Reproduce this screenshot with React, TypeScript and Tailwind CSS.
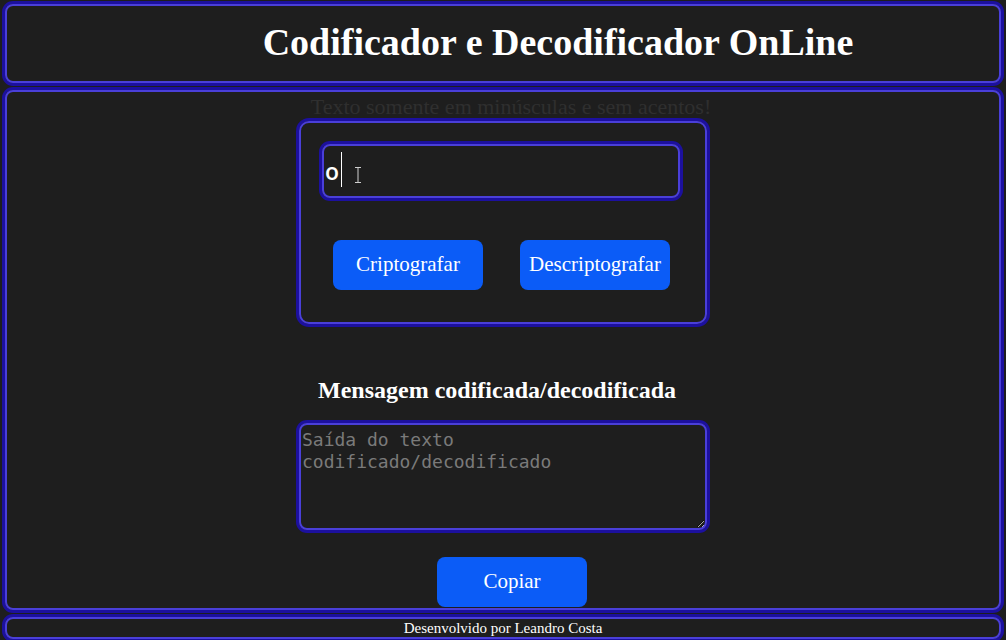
import { useState } from 'react';

export default function App() {
  const [texto, setTexto] = useState('o');
  const [saida, setSaida] = useState('');

  const frame = 'border-2 border-[#4a3fd9] shadow-[0_0_0_3px_#1c109e]';
  const botao =
    'w-[150px] h-[50px] rounded-lg bg-[#0b5cf7] text-white text-[21px] font-["Liberation_Serif",serif]';

  return (
    <div className="h-[640px] w-full overflow-hidden bg-[#1e1e1e] px-[5px] pt-[4px] flex flex-col font-['Liberation_Serif',serif]">
      {/* Cabeçalho */}
      <header className={`h-[79px] rounded-lg ${frame} flex items-center justify-center pl-[110px]`}>
        <h1 className="text-[38px] font-bold text-white leading-none pb-[4px]">
          Codificador e Decodificador OnLine
        </h1>
      </header>

      {/* Conteúdo */}
      <main className={`mt-[7px] h-[520px] rounded-lg ${frame} flex flex-col items-center`}>
        <p className="mt-[1px] h-[28px] text-[22px] text-[#2f2f2f] leading-[28px] pl-[16px]">
          Texto somente em minúsculas e sem acentos!
        </p>

        <div className={`w-[408px] h-[203px] rounded-[10px] ${frame} px-[21px] pt-[21px]`}>
          <div className="relative">
            <input
              value={texto}
              onChange={(e) => setTexto(e.target.value)}
              className={`w-[358px] h-[54px] rounded-lg ${frame} bg-transparent px-[1px] text-white text-[23px] font-semibold font-['Open_Sans',sans-serif] outline-none`}
            />
            <span className="absolute left-[19px] top-[8px] w-px h-[35px] bg-white" />
            <svg className="absolute left-[32px] top-[23px]" width="8" height="16" viewBox="0 0 8 16">
              <path d="M1 0.5h6M4 0.5v15M1 15.5h6" stroke="#cfcfcf" strokeWidth="1" fill="none" />
            </svg>
          </div>
          <div className="mt-[42px] flex justify-center gap-[37px] pr-[3px]">
            <button className={botao}>Criptografar</button>
            <button className={botao}>Descriptografar</button>
          </div>
        </div>

        <h2 className="mt-[52px] text-[24px] font-bold text-white leading-[28px] pr-[12px]">
          Mensagem codificada/decodificada
        </h2>

        <textarea
          value={saida}
          onChange={(e) => setSaida(e.target.value)}
          placeholder="Saída do texto codificado/decodificado"
          className={`mt-[19px] w-[408px] h-[107px] rounded-lg ${frame} bg-transparent px-[1px] pt-[4px] text-[18px] leading-[22px] text-white placeholder:text-[#7a7a7a] font-['DejaVu_Sans_Mono',monospace] outline-none`}
        />

        <button className={`mt-[27px] ml-[18px] ${botao}`}>Copiar</button>
      </main>

      {/* Rodapé */}
      <footer className={`mt-[7px] h-[22px] rounded-lg ${frame} flex items-center justify-center`}>
        <span className="text-[15px] text-white leading-none">Desenvolvido por Leandro Costa</span>
      </footer>
    </div>
  );
}
